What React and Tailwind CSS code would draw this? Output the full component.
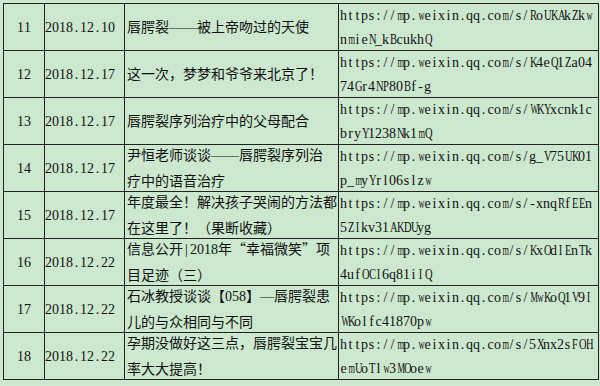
import React from 'react'

// Datos de las filas de la tabla
const rows = [
  { n: '11', date: '2018.12.10', title: ['唇腭裂——被上帝吻过的天使'], url: ['https://mp.weixin.qq.com/s/RoUKAkZkw', 'nmieN_kBcukhQ'] },
  { n: '12', date: '2018.12.17', title: ['这一次，梦梦和爷爷来北京了！'], url: ['https://mp.weixin.qq.com/s/K4eQ1Za04', '74Gr4NP80Bf-g'] },
  { n: '13', date: '2018.12.17', title: ['唇腭裂序列治疗中的父母配合'], url: ['https://mp.weixin.qq.com/s/WKYxcnk1c', 'bryY1238Nk1mQ'] },
  { n: '14', date: '2018.12.17', title: ['尹恒老师谈谈——唇腭裂序列治', '疗中的语音治疗'], url: ['https://mp.weixin.qq.com/s/g_V75UK01', 'p_myYrl06slzw'] },
  { n: '15', date: '2018.12.17', title: ['年度最全！解决孩子哭闹的方法都', '在这里了！（果断收藏）'], url: ['https://mp.weixin.qq.com/s/-xnqRfEEn', '5ZIkv31AKDUyg'] },
  { n: '16', date: '2018.12.22', title: ['信息公开|2018年“幸福微笑”项', '目足迹（三）'], url: ['https://mp.weixin.qq.com/s/KxOdIEnTk', '4ufOCI6q81iIQ'] },
  { n: '17', date: '2018.12.22', title: ['石冰教授谈谈【058】—唇腭裂患', '儿的与众相同与不同'], url: ['https://mp.weixin.qq.com/s/MwKoQ1V9I', 'WKolfc41870pw'] },
  { n: '18', date: '2018.12.22', title: ['孕期没做好这三点，唇腭裂宝宝几', '率大大提高！'], url: ['https://mp.weixin.qq.com/s/5Xnx2sFOH', 'emUoTlw3MOoew'] },
]

// Letras anchas que se estrechan para caber en medio ancho
const veryWide = /[WMmw]/
const wide = /[A-Z]/

const charClass = (c) => {
  if (veryWide.test(c)) return "inline-block w-[7px] text-center scale-x-[0.6] font-['Liberation_Serif']"
  if (wide.test(c)) return "inline-block w-[7px] text-center scale-x-75 font-['Liberation_Serif']"
  return "inline-block w-[7px] text-center font-['Liberation_Serif']"
}

// Carácter de ancho completo (CJK); la raya larga se toma de la serif
const fullClass = (c) =>
  c === '—'
    ? "inline-block w-[14px] text-center font-['Liberation_Serif']"
    : "inline-block w-[14px] text-center font-['Noto_Sans_CJK_SC',sans-serif]"

// Texto con caracteres latinos de ancho fijo (medio ancho, como SimSun)
const Txt = ({ s }) => (
  <>
    {Array.from(s).map((c, i) => (
      <span key={i} className={c.charCodeAt(0) < 128 ? charClass(c) : fullClass(c)}>
        {c}
      </span>
    ))}
  </>
)

const Lines = ({ lines }) => (
  <div className="leading-[24px] shrink-0">
    {lines.map((l, i) => (
      <div key={i} className="whitespace-nowrap">
        <Txt s={l} />
      </div>
    ))}
  </div>
)

export default function App() {
  return (
    <div className="w-[600px] h-[386px] bg-[#cce8cf] pt-[3px] pl-[3px] overflow-hidden text-[14px] text-[#111] font-['Liberation_Serif','Noto_Sans_CJK_SC',serif]">
      <table className="border-collapse table-fixed w-[595px]">
        <colgroup>
          <col className="w-[41px]" />
          <col className="w-[80px]" />
          <col className="w-[214px]" />
          <col className="w-[260px]" />
        </colgroup>
        <tbody>
          {rows.map((r) => (
            <tr key={r.n}>
              <td className="border border-[#222] p-0">
                <div className="h-[46px] flex items-center justify-center">
                  <Txt s={r.n} />
                </div>
              </td>
              <td className="border border-[#222] p-0">
                <div className="h-[46px] flex items-center whitespace-nowrap">
                  <Txt s={r.date} />
                </div>
              </td>
              <td className="border border-[#222] p-0">
                <div className="h-[46px] flex items-center pl-[2px]">
                  <Lines lines={r.title} />
                </div>
              </td>
              <td className="border border-[#222] p-0">
                <div className="h-[46px] flex items-center pl-[1px] pt-[2px]">
                  <Lines lines={r.url} />
                </div>
              </td>
            </tr>
          ))}
        </tbody>
      </table>
    </div>
  )
}
